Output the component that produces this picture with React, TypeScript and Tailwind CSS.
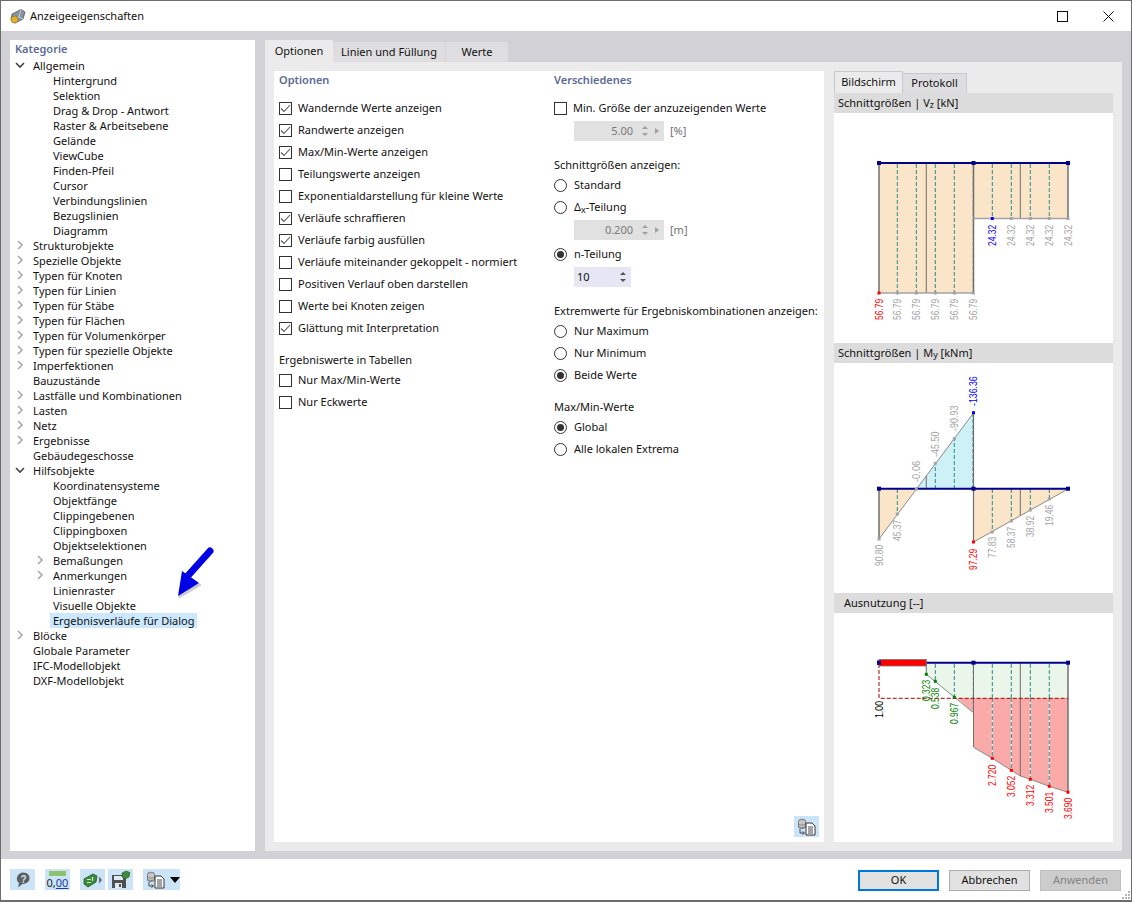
import type { ReactNode } from 'react'

type TreeRow = { label: string; level: 0 | 1; arrow?: 'open' | 'closed'; selected?: boolean }

const TREE: TreeRow[] = [
  { label: 'Allgemein', level: 0, arrow: 'open' },
  ...['Hintergrund', 'Selektion', 'Drag & Drop - Antwort', 'Raster & Arbeitsebene', 'Gelände', 'ViewCube', 'Finden-Pfeil', 'Cursor', 'Verbindungslinien', 'Bezugslinien', 'Diagramm'].map(label => ({ label, level: 1 as const })),
  { label: 'Strukturobjekte', level: 0, arrow: 'closed' },
  { label: 'Spezielle Objekte', level: 0, arrow: 'closed' },
  { label: 'Typen für Knoten', level: 0, arrow: 'closed' },
  { label: 'Typen für Linien', level: 0, arrow: 'closed' },
  { label: 'Typen für Stäbe', level: 0, arrow: 'closed' },
  { label: 'Typen für Flächen', level: 0, arrow: 'closed' },
  { label: 'Typen für Volumenkörper', level: 0, arrow: 'closed' },
  { label: 'Typen für spezielle Objekte', level: 0, arrow: 'closed' },
  { label: 'Imperfektionen', level: 0, arrow: 'closed' },
  { label: 'Bauzustände', level: 0 },
  { label: 'Lastfälle und Kombinationen', level: 0, arrow: 'closed' },
  { label: 'Lasten', level: 0, arrow: 'closed' },
  { label: 'Netz', level: 0, arrow: 'closed' },
  { label: 'Ergebnisse', level: 0, arrow: 'closed' },
  { label: 'Gebäudegeschosse', level: 0 },
  { label: 'Hilfsobjekte', level: 0, arrow: 'open' },
  { label: 'Koordinatensysteme', level: 1 },
  { label: 'Objektfänge', level: 1 },
  { label: 'Clippingebenen', level: 1 },
  { label: 'Clippingboxen', level: 1 },
  { label: 'Objektselektionen', level: 1 },
  { label: 'Bemaßungen', level: 1, arrow: 'closed' },
  { label: 'Anmerkungen', level: 1, arrow: 'closed' },
  { label: 'Linienraster', level: 1 },
  { label: 'Visuelle Objekte', level: 1 },
  { label: 'Ergebnisverläufe für Dialog', level: 1, selected: true },
  { label: 'Blöcke', level: 0, arrow: 'closed' },
  { label: 'Globale Parameter', level: 0 },
  { label: 'IFC-Modellobjekt', level: 0 },
  { label: 'DXF-Modellobjekt', level: 0 },
]

const OPTIONS: [string, boolean][] = [
  ['Wandernde Werte anzeigen', true],
  ['Randwerte anzeigen', true],
  ['Max/Min-Werte anzeigen', true],
  ['Teilungswerte anzeigen', false],
  ['Exponentialdarstellung für kleine Werte', false],
  ['Verläufe schraffieren', true],
  ['Verläufe farbig ausfüllen', true],
  ['Verläufe miteinander gekoppelt - normiert', false],
  ['Positiven Verlauf oben darstellen', false],
  ['Werte bei Knoten zeigen', false],
  ['Glättung mit Interpretation', true],
]

function Chevron({ open }: { open: boolean }) {
  return (
    <svg width="10" height="10" viewBox="0 0 10 10" className="shrink-0">
      {open
        ? <path d="M1 3 L5 7 L9 3" fill="none" stroke="#444" strokeWidth="1.6" />
        : <path d="M3 1 L7 5 L3 9" fill="none" stroke="#a8a8a8" strokeWidth="1.6" />}
    </svg>
  )
}

function Tree() {
  return (
    <div className="flex flex-col">
      {TREE.map(row => (
        <div key={row.label} className={`relative flex h-[15px] items-center ${row.level === 0 ? 'pl-[15px]' : 'pl-[35px]'}`}>
          {row.arrow && (
            <span className={`absolute top-[2px] ${row.level === 0 ? 'left-0' : 'left-[20px]'}`}>
              <Chevron open={row.arrow === 'open'} />
            </span>
          )}
          <span className={`h-[15px] px-[3px] leading-[15px] ${row.selected ? 'bg-[#cce8ff]' : ''}`}>{row.label}</span>
        </div>
      ))}
    </div>
  )
}

function Check({ checked, label }: { checked: boolean; label: string }) {
  return (
    <div className="flex h-[22px] items-center gap-[6px]">
      <span className="flex h-[13px] w-[13px] shrink-0 items-center justify-center border border-[#333] bg-white">
        {checked && (
          <svg width="11" height="11" viewBox="0 0 11 11">
            <path d="M1 5.5 L4 8.5 L10 2" fill="none" stroke="#555" strokeWidth="1.1" />
          </svg>
        )}
      </span>
      <span>{label}</span>
    </div>
  )
}

function Radio({ checked, children }: { checked?: boolean; children: ReactNode }) {
  return (
    <div className="flex h-[22px] items-center gap-[7px]">
      <span className="flex h-[13px] w-[13px] shrink-0 items-center justify-center rounded-full border border-[#333] bg-white">
        {checked && <span className="h-[7px] w-[7px] rounded-full bg-[#333]" />}
      </span>
      <span>{children}</span>
    </div>
  )
}

function SpinArrows({ color, side }: { color: string; side?: boolean }) {
  const ox = side ? 2 : 0
  return (
    <svg width={side ? 24 : 10} height="14" viewBox={side ? '0 0 24 14' : '0 0 10 14'} className="shrink-0">
      <path d={`M${2 + ox} 5 L${5 + ox} 2 L${8 + ox} 5 Z`} fill={color} />
      <path d={`M${2 + ox} 9 L${5 + ox} 12 L${8 + ox} 9 Z`} fill={color} />
      {side && <path d="M17 4 L21 7 L17 10 Z" fill={color} />}
    </svg>
  )
}

function DisabledSpin({ value, unit, className }: { value: string; unit: string; className: string }) {
  return (
    <div className={`ml-[20px] flex items-center gap-[6px] ${className}`}>
      <div className="flex h-[20px] w-[90px] items-center justify-end bg-[#e1e1e1] pr-[2px] text-[#7a7a7a]">
        <span className="mr-[5px]">{value}</span>
        <SpinArrows color="#a0a0a0" side />
      </div>
      <span className="text-[#707070]">{unit}</span>
    </div>
  )
}

function SectionTitle({ children }: { children: ReactNode }) {
  return <div className="flex h-[18px] items-center font-semibold text-[#5b6a97]">{children}</div>
}

function PlainLabel({ children, className }: { children: ReactNode; className: string }) {
  return <div className={`flex h-[18px] items-center ${className}`}>{children}</div>
}

function RotLabel({ x, y, text, color }: { x: number; y: number; text: string; color: string }) {
  return (
    <text
      transform={`translate(${x + 3.5} ${y}) rotate(-90)`}
      fontFamily="'Liberation Sans', sans-serif"
      fontSize="10"
      fill={color}
      textLength={text.length * 4.25}
      lengthAdjust="spacingAndGlyphs"
    >
      {text}
    </text>
  )
}

function Dot({ x, y, color, size = 3 }: { x: number; y: number; color: string; size?: number }) {
  return <rect x={x - size / 2} y={y - size / 2} width={size} height={size} fill={color} />
}

function Dash({ x, y1, y2, color = '#2a8a88' }: { x: number; y1: number; y2: number; color?: string }) {
  return <line x1={x} y1={y1} x2={x} y2={y2} stroke={color} strokeWidth="1" strokeDasharray="4 2" />
}

function Solid({ x, y1, y2, w = 1 }: { x: number; y1: number; y2: number; w?: number }) {
  return <line x1={x} y1={y1} x2={x} y2={y2} stroke="#6f6f6f" strokeWidth={w} />
}

function BeamLine({ y, x1 = 879 }: { y: number; x1?: number }) {
  return (
    <>
      <line x1={x1} y1={y} x2="1068" y2={y} stroke="#00008b" strokeWidth="2" />
      <Dot x={879} y={y} color="#00008b" size={4} />
      <Dot x={973.5} y={y} color="#00008b" size={4} />
      <Dot x={1068} y={y} color="#00008b" size={4} />
    </>
  )
}

const GREY = '#a3a3a3'

function ChartVz() {
  return (
    <svg width="279" height="230" viewBox="834 113 279 230" className="block">
      <rect x="879" y="163" width="94.5" height="130" fill="#fbe5c8" />
      <rect x="973.5" y="163" width="94.5" height="55.5" fill="#fbe5c8" />
      {[897.3, 916.3, 935.3, 954.3, 973.3].map(x => <Dash key={x} x={x} y1={164} y2={293} />)}
      {[992.3, 1011.3, 1030.3, 1049.3].map(x => <Dash key={x} x={x} y1={164} y2={218} />)}
      <Solid x={926.3} y1={163} y2={293} />
      <Solid x={1020.3} y1={163} y2={218} />
      <Solid x={879} y1={163} y2={293} w={1.5} />
      <Solid x={973.5} y1={163} y2={293} w={1.5} />
      <Solid x={1068} y1={163} y2={218} w={1.5} />
      <line x1="879" y1="293" x2="973.5" y2="293" stroke={GREY} strokeWidth="1.5" />
      <line x1="973.5" y1="218.5" x2="1068" y2="218.5" stroke={GREY} strokeWidth="1.5" />
      <BeamLine y={163} />
      <Dot x={879} y={293} color="#ff0000" />
      {[897.3, 916.3, 935.3, 954.3, 973.3].map(x => <Dot key={x} x={x} y={293} color={GREY} />)}
      <Dot x={992.3} y={218.5} color="#0000ff" />
      {[1011.3, 1030.3, 1049.3, 1068].map(x => <Dot key={x} x={x} y={218.5} color={GREY} />)}
      <RotLabel x={879} y={320} text="56.79" color="#ff0000" />
      {[897.3, 916.3, 935.3, 954.3, 973.3].map(x => <RotLabel key={x} x={x} y={320} text="56.79" color={GREY} />)}
      <RotLabel x={992.3} y={246} text="24.32" color="#0000ff" />
      {[1011.3, 1030.3, 1049.3, 1068].map(x => <RotLabel key={x} x={x} y={246} text="24.32" color={GREY} />)}
    </svg>
  )
}

function ChartMy() {
  return (
    <svg width="279" height="230" viewBox="834 363 279 230" className="block">
      <path d="M916.3 489 L973.5 413 L973.5 489 Z" fill="#cdf1f7" />
      <path d="M879 489 L916.3 489 L879 539 Z" fill="#fbe5c8" />
      <path d="M973.5 489 L1068 489 L973.5 542 Z" fill="#fbe5c8" />
      <Dash x={897.3} y1={489} y2={514} />
      <Dash x={935.3} y1={489} y2={463} />
      <Dash x={954.3} y1={489} y2={439} />
      <Dash x={973} y1={489} y2={413} />
      <Dash x={992.3} y1={489} y2={532} />
      <Dash x={1011.3} y1={489} y2={521} />
      <Dash x={1030.3} y1={489} y2={510} />
      <Dash x={1049.3} y1={489} y2={499} />
      <Solid x={926.3} y1={489} y2={476} />
      <Solid x={1020.3} y1={489} y2={516} />
      <Solid x={879} y1={489} y2={539} w={1.5} />
      <Solid x={973.5} y1={413} y2={542} w={1.2} />
      <path d="M879 539 L973.5 413" stroke="#8a8a8a" fill="none" />
      <path d="M973.5 542 L1068 489" stroke="#8a8a8a" fill="none" />
      <BeamLine y={488.7} />
      <Dot x={973.5} y={412.7} color="#0000ff" />
      <Dot x={973.5} y={542} color="#ff0000" />
      <Dot x={879} y={539} color={GREY} />
      <Dot x={897.3} y={514} color={GREY} />
      <Dot x={916.3} y={489} color={GREY} />
      <Dot x={935.3} y={463.3} color={GREY} />
      <Dot x={954.3} y={438.7} color={GREY} />
      <Dot x={992.3} y={532} color={GREY} />
      <Dot x={1011.3} y={521} color={GREY} />
      <Dot x={1030.3} y={510} color={GREY} />
      <Dot x={1049.3} y={499} color={GREY} />
      <RotLabel x={973.5} y={406} text="-136.36" color="#0000ff" />
      <RotLabel x={954.3} y={431} text="-90.93" color={GREY} />
      <RotLabel x={935.3} y={457} text="-45.50" color={GREY} />
      <RotLabel x={916.3} y={482} text="-0.06" color={GREY} />
      <RotLabel x={897.3} y={541} text="45.37" color={GREY} />
      <RotLabel x={879} y={566} text="90.80" color={GREY} />
      <RotLabel x={973.5} y={570} text="97.29" color="#ff0000" />
      <RotLabel x={992.3} y={558} text="77.83" color={GREY} />
      <RotLabel x={1011.3} y={548} text="58.37" color={GREY} />
      <RotLabel x={1030.3} y={537} text="38.92" color={GREY} />
      <RotLabel x={1049.3} y={526} text="19.46" color={GREY} />
    </svg>
  )
}

const RED_DASHES: [number, number][] = [[992.3, 758], [1011.3, 770], [1030.3, 779], [1049.3, 786]]

function ChartUtil() {
  const GREEN = '#008000'
  const RED = '#ff0000'
  return (
    <svg width="279" height="229" viewBox="834 613 279 229" className="block">
      <path d="M926.3 663 L1068 663 L1068 698 L954.5 698 L926.3 674.3 Z" fill="#e9f6e9" />
      <path d="M957 698 L1068 698 L1068 792.3 L1049.3 786.3 L1030.3 779.3 L1020.3 776 L1011.3 770.3 L992.3 758.3 L973.5 747.3 L973.5 712.7 Z" fill="#fbaaaa" />
      {[935.3, 954.3, 973.3].map(x => <Dash key={x} x={x} y1={664} y2={x === 973.3 ? 712 : x === 954.3 ? 697 : 681} />)}
      {RED_DASHES.map(([x, y]) => (
        <g key={x}>
          <Dash x={x} y1={664} y2={698} />
          <line x1={x} y1={698} x2={x} y2={y} stroke="#ffffff" />
          <Dash x={x} y1={698} y2={y} />
        </g>
      ))}
      <Solid x={1020.3} y1={663} y2={776} />
      <Solid x={973.5} y1={663} y2={747} />
      <Solid x={1068} y1={663} y2={792} w={1.5} />
      <Solid x={926.3} y1={663} y2={674} />
      <path d="M926.3 674.3 L973.5 712.7" stroke="#8a8a8a" fill="none" />
      <path d="M973.5 747.3 L992.3 758.3 L1011.3 770.3 L1020.3 776 L1030.3 779.3 L1049.3 786.3 L1068 792.3" stroke="#8a8a8a" fill="none" />
      <path d="M879 664 L879 698.3 L1068 698.3" stroke="#b00000" strokeDasharray="4 2" fill="none" />
      <BeamLine y={662.7} x1={926} />
      <rect x="879" y="659.5" width="47.3" height="6.5" fill={RED} stroke="#777" strokeWidth="0.8" />
      <Dot x={879} y={662.7} color="#00008b" size={4} />
      <Dot x={926.3} y={674.3} color={GREEN} />
      <Dot x={935.3} y={681.3} color={GREEN} />
      <Dot x={954.3} y={697.3} color={GREEN} />
      <Dot x={992.3} y={758.3} color={RED} />
      <Dot x={1011.3} y={770.3} color={RED} />
      <Dot x={1030.3} y={779.3} color={RED} />
      <Dot x={1049.3} y={786.3} color={RED} />
      <Dot x={1068} y={792.3} color={RED} />
      <RotLabel x={879} y={718} text="1.00" color="#000" />
      <RotLabel x={926.3} y={701} text="0.323" color={GREEN} />
      <RotLabel x={935.3} y={709} text="0.538" color={GREEN} />
      <RotLabel x={954.3} y={724} text="0.967" color={GREEN} />
      <RotLabel x={992.3} y={786} text="2.720" color={RED} />
      <RotLabel x={1011.3} y={797} text="3.052" color={RED} />
      <RotLabel x={1030.3} y={806} text="3.312" color={RED} />
      <RotLabel x={1049.3} y={813} text="3.501" color={RED} />
      <RotLabel x={1068} y={819} text="3.690" color={RED} />
    </svg>
  )
}

function ChartHeader({ children, className = 'pl-[4px]' }: { children: ReactNode; className?: string }) {
  return <div className={`flex h-[20px] items-center bg-[#dcdcdc] ${className}`}>{children}</div>
}

function ToolButton({ className, children }: { className: string; children: ReactNode }) {
  return <div className={`flex h-[21px] items-center justify-center bg-[#cce4f7] ${className}`}>{children}</div>
}

function DataIcon() {
  return (
    <svg width="22" height="18" viewBox="0 0 22 18">
      <ellipse cx="6" cy="3" rx="3.5" ry="1.8" fill="#b5b5b5" stroke="#666" strokeWidth="0.7" />
      <path d="M2.5 3 V9 C2.5 11 9.5 11 9.5 9 V3" fill="#c8c8c8" stroke="#666" strokeWidth="0.7" />
      <path d="M2.5 5.5 C2.5 7.5 9.5 7.5 9.5 5.5 M2.5 8 C2.5 10 9.5 10 9.5 8" fill="none" stroke="#666" strokeWidth="0.7" />
      <path d="M4 11 V15 H8 M6.5 13.5 L8.5 15 L6.5 16.5" fill="none" stroke="#444" strokeWidth="1" />
      <path d="M10 5 H16 L19 8 V17 H10 Z" fill="#fff" stroke="#333" strokeWidth="1" />
      <path d="M12 9 H17 M12 11 H17 M12 13 H17 M12 15 H17" stroke="#333" strokeWidth="0.9" />
    </svg>
  )
}

function Footer() {
  return (
    <div className="flex flex-1 items-start bg-white pl-[9px] pr-[10px] pt-[10px]">
      <div className="flex items-center">
        <ToolButton className="w-[25px]">
          <svg width="18" height="18" viewBox="0 0 18 18">
            <path d="M9.5 1.5 C13.5 1.5 16 4.5 15.5 8 C15 11.5 11.5 13 8.5 13 L4 16.5 L5 12 C3 10.5 2.5 8.5 3 6.5 C3.6 3.5 6 1.5 9.5 1.5 Z" fill="#5f5f5f" />
            <text x="9.5" y="11.5" textAnchor="middle" fontFamily="'Liberation Sans', sans-serif" fontSize="10" fontWeight="700" fill="#cce4f7">?</text>
          </svg>
        </ToolButton>
        <ToolButton className="ml-[10px] w-[25px] flex-col">
          <span className="mt-[1px] h-[5px] w-[17px] bg-[#8dc26f]" />
          <span className="text-[11px] leading-[13px] text-[#222]">0,<span className="text-[#1c3f94] underline">00</span></span>
        </ToolButton>
        <ToolButton className="ml-[10px] w-[25px]">
          <svg width="20" height="16" viewBox="0 0 20 16">
            <path d="M1 7 L10 2 L14 4 L13 10 L5 15 L1 12 Z" fill="#3c8a3c" stroke="#1f5a1f" strokeWidth="0.8" />
            <path d="M4 7.5 H8 M4 10.5 H8 M9.5 5 V9" stroke="#cfe8cf" strokeWidth="1.2" />
            <path d="M16 4.5 L19 8 L16 11.5 Z" fill="#6a6a6a" />
          </svg>
        </ToolButton>
        <ToolButton className="ml-[3px] w-[25px]">
          <svg width="21" height="19" viewBox="0 0 21 19">
            <path d="M2 5 H14 L16 7 V18 H2 Z" fill="#4f4f4f" />
            <rect x="4" y="6" width="9" height="4" fill="#dfeaf5" />
            <rect x="5" y="13" width="7" height="5" fill="#dfeaf5" />
            <rect x="9" y="14" width="2" height="3" fill="#4f4f4f" />
            <path d="M12 3 L16 1 L20 2.5 L19 7 L15 9 L12 7 Z" fill="#3c8a3c" stroke="#1f5a1f" strokeWidth="0.6" />
          </svg>
        </ToolButton>
        <ToolButton className="ml-[10px] w-[37px] gap-[3px] pl-[2px]">
          <DataIcon />
          <svg width="10" height="6" viewBox="0 0 10 6" className="shrink-0">
            <path d="M0 0 H10 L5 6 Z" fill="#000" />
          </svg>
        </ToolButton>
      </div>
      <div className="ml-auto flex items-center gap-[10px] pt-[1px]">
        <button className="h-[21px] w-[81px] border-2 border-[#0078d7] bg-[#e1e1e1]">OK</button>
        <button className="h-[21px] w-[81px] border border-[#adadad] bg-[#e1e1e1]">Abbrechen</button>
        <button className="h-[21px] w-[81px] border border-[#bfbfbf] bg-[#cccccc] text-[#838383]">Anwenden</button>
      </div>
    </div>
  )
}

export default function App() {
  return (
    <div className="relative flex h-[902px] w-[1132px] flex-col overflow-hidden border border-b-2 border-[#6d6d6d] bg-white font-['Noto_Sans',sans-serif] text-[11px] text-[#111]">
      {/* Title bar */}
      <div className="flex h-[30px] shrink-0 items-center bg-white pl-[8px] pr-[17px]">
        <svg width="17" height="17" viewBox="0 0 17 17" className="shrink-0">
          <path d="M3 6 L12 1.5 L16 4 L14 11 L6 15 L2 12 Z" fill="#8b93a0" stroke="#4d5563" strokeWidth="0.8" />
          <path d="M12 1.5 L10 9 L14 11 M10 9 L3 12" fill="none" stroke="#d6dbe2" strokeWidth="0.8" />
          <circle cx="5.5" cy="11.5" r="3.5" fill="#e0b030" stroke="#8a6b10" strokeWidth="0.6" />
        </svg>
        <span className="ml-[4px]">Anzeigeeigenschaften</span>
        <svg width="11" height="11" viewBox="0 0 11 11" className="ml-auto">
          <rect x="0.5" y="0.5" width="10" height="10" fill="none" stroke="#111" />
        </svg>
        <svg width="11" height="11" viewBox="0 0 11 11" className="ml-[35px]">
          <path d="M0.5 0.5 L10.5 10.5 M10.5 0.5 L0.5 10.5" stroke="#111" />
        </svg>
      </div>

      {/* Body */}
      <div className="flex h-[828px] shrink-0 gap-[10px] bg-[#d2d2d6] pb-[8px] pl-[9px] pr-[9px] pt-[9px]">
        {/* Category tree */}
        <div className="relative w-[245px] shrink-0 bg-white pl-[5px]">
          <div className="flex h-[18px] items-center font-semibold text-[#5b6a97]">Kategorie</div>
          <Tree />
          <svg width="50" height="62" viewBox="0 0 50 62" className="absolute left-[163px] top-[506px]">
            <path d="M39 7 L13 36 M6 52 L10 27 L28 39 Z" fill="#9a9aa8" stroke="#9a9aa8" strokeWidth="1" opacity="0.5" />
            <path d="M37 5 L12 33" stroke="#0000e6" strokeWidth="7" strokeLinecap="round" />
            <path d="M5 50 L9 25 L26 37 Z" fill="#0000e6" />
          </svg>
        </div>

        {/* Main tabs */}
        <div className="flex min-w-0 flex-1 flex-col">
          <div className="flex h-[22px] shrink-0 items-end">
            <div className="flex h-[22px] w-[68px] items-center justify-center bg-[#ebebeb]">Optionen</div>
            <div className="flex h-[20px] w-[112px] items-center justify-center bg-[#dedee0]">Linien und Füllung</div>
            <div className="ml-[1px] flex h-[20px] w-[62px] items-center justify-center bg-[#dedee0]">Werte</div>
          </div>
          <div className="flex min-h-0 flex-1 gap-[10px] bg-[#ebebeb] p-[9px]">
            {/* Options panel */}
            <div className="flex w-[550px] shrink-0 flex-col bg-white pb-[5px] pr-[5px]">
              <div className="flex">
                <div className="w-[280px] shrink-0 pl-[5px]">
                  <SectionTitle>Optionen</SectionTitle>
                  <div className="mt-[8px]">
                    {OPTIONS.map(([label, checked]) => <Check key={label} label={label} checked={checked} />)}
                  </div>
                  <PlainLabel className="mt-[12px]">Ergebniswerte in Tabellen</PlainLabel>
                  <Check label="Nur Max/Min-Werte" checked={false} />
                  <Check label="Nur Eckwerte" checked={false} />
                </div>
                <div className="min-w-0 flex-1">
                  <SectionTitle>Verschiedenes</SectionTitle>
                  <div className="mt-[8px]">
                    <Check label="Min. Größe der anzuzeigenden Werte" checked={false} />
                  </div>
                  <DisabledSpin value="5.00" unit="[%]" className="mt-[2px]" />
                  <PlainLabel className="mt-[15px]">Schnittgrößen anzeigen:</PlainLabel>
                  <Radio>Standard</Radio>
                  <Radio>Δ<sub className="text-[9px]">x</sub>-Teilung</Radio>
                  <DisabledSpin value="0.200" unit="[m]" className="mt-[2px]" />
                  <div className="mt-[3px]">
                    <Radio checked>n-Teilung</Radio>
                  </div>
                  <div className="ml-[20px] mt-[2px] flex h-[20px] w-[57px] items-center justify-between bg-[#e6e6f5] pl-[3px] pr-[3px]">
                    <span>10</span>
                    <SpinArrows color="#555" />
                  </div>
                  <PlainLabel className="mt-[15px] whitespace-nowrap">Extremwerte für Ergebniskombinationen anzeigen:</PlainLabel>
                  <Radio>Nur Maximum</Radio>
                  <Radio>Nur Minimum</Radio>
                  <Radio checked>Beide Werte</Radio>
                  <PlainLabel className="mt-[12px]">Max/Min-Werte</PlainLabel>
                  <Radio checked>Global</Radio>
                  <Radio>Alle lokalen Extrema</Radio>
                </div>
              </div>
              <div className="mt-auto flex h-[21px] w-[25px] items-center justify-center self-end bg-[#cce4f7]">
                <DataIcon />
              </div>
            </div>

            {/* Preview column */}
            <div className="flex w-[279px] shrink-0 flex-col">
              <div className="flex h-[22px] shrink-0 items-end">
                <div className="flex h-[22px] w-[69px] items-center justify-center border border-b-0 border-[#c8c8d0] bg-[#ebebeb]">Bildschirm</div>
                <div className="flex h-[20px] w-[64px] items-center justify-center border border-b-0 border-l-0 border-[#c8c8d0] bg-[#dedee0]">Protokoll</div>
              </div>
              <ChartHeader>Schnittgrößen | V<sub className="text-[9px]">z</sub>&nbsp;[kN]</ChartHeader>
              <div className="bg-white"><ChartVz /></div>
              <ChartHeader>Schnittgrößen | M<sub className="text-[9px]">y</sub>&nbsp;[kNm]</ChartHeader>
              <div className="bg-white"><ChartMy /></div>
              <ChartHeader className="pl-[10px]">Ausnutzung [--]</ChartHeader>
              <div className="flex-1 bg-white"><ChartUtil /></div>
            </div>
          </div>
        </div>
      </div>

      <Footer />

      {/* Resize grip */}
      <svg width="10" height="10" viewBox="0 0 10 10" className="absolute bottom-0 right-0">
        <path d="M7 1 H9 V3 H7 Z M4 4 H6 V6 H4 Z M7 4 H9 V6 H7 Z M1 7 H3 V9 H1 Z M4 7 H6 V9 H4 Z M7 7 H9 V9 H7 Z" fill="#b5b5b5" />
      </svg>
    </div>
  )
}
